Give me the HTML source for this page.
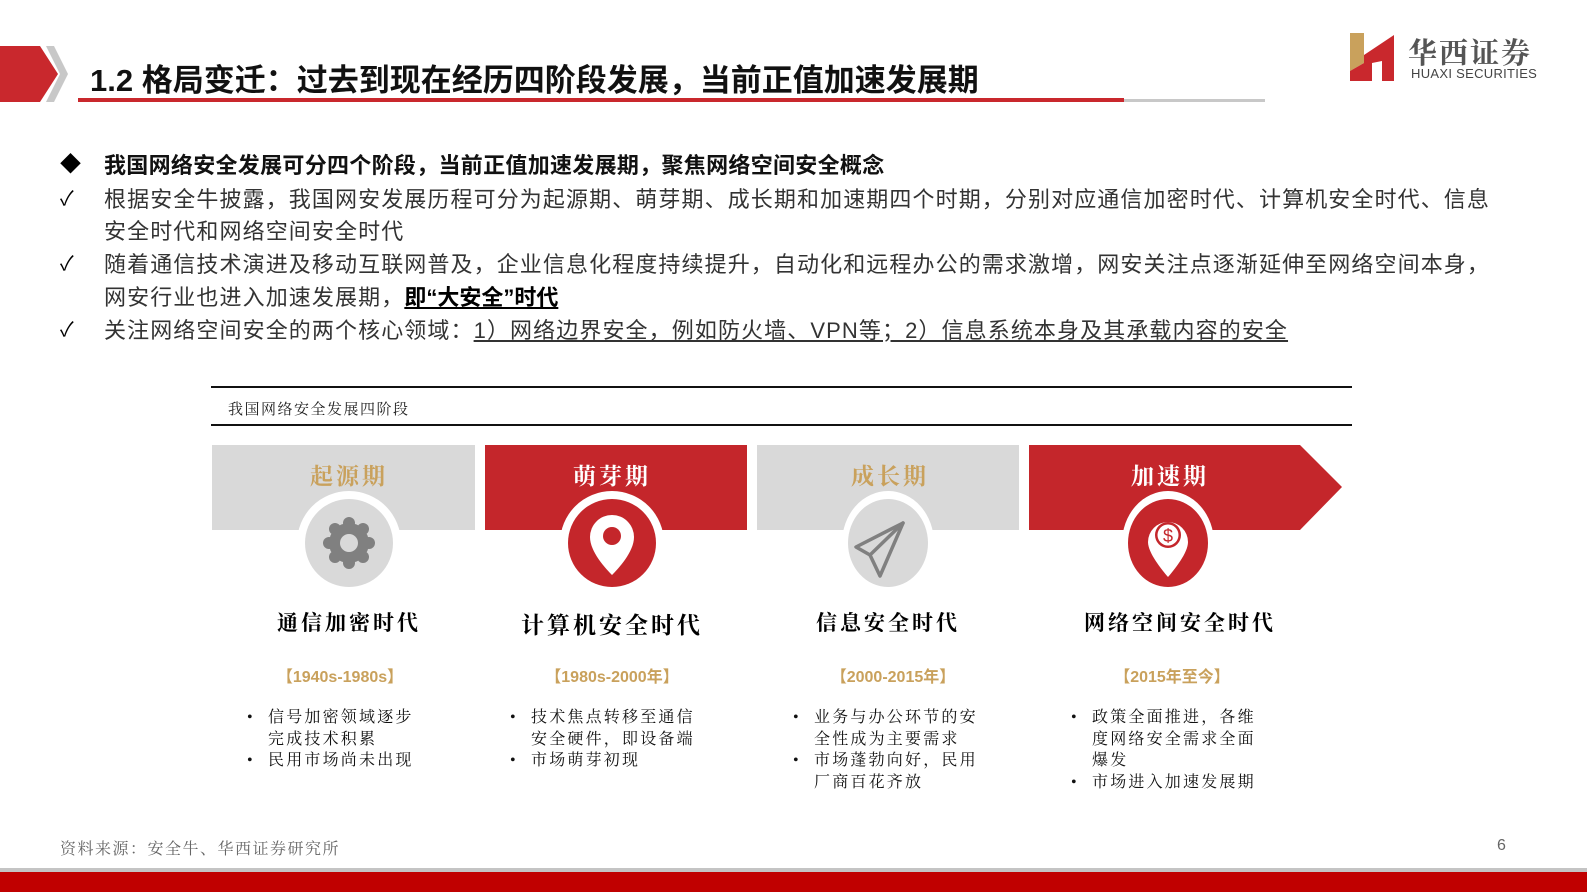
<!DOCTYPE html>
<html><head><meta charset="utf-8"><style>
*{margin:0;padding:0;box-sizing:border-box}
body{width:1587px;height:892px;position:relative;overflow:hidden;background:#fff;font-family:"Liberation Sans","Noto Sans CJK SC",sans-serif}
.a{position:absolute;white-space:nowrap}
.body{font-size:22px;letter-spacing:1.1px;color:#333;line-height:33px}
.serif{font-family:"Liberation Serif","Noto Serif CJK SC",serif}
.band{position:absolute;top:445px;height:85px}
.lbl{position:absolute;top:458px;font-size:23px;font-weight:bold;letter-spacing:3px;text-align:center;width:200px}
.era{position:absolute;top:607px;font-size:21px;font-weight:bold;letter-spacing:3px;color:#000;text-align:center;width:260px}
.yr{position:absolute;top:663px;font-size:16px;font-weight:bold;color:#c9a15c;text-align:center;width:200px}
.bl{position:absolute;top:707px;font-size:16px;line-height:21.6px;color:#111;letter-spacing:2.2px;white-space:normal}
.bl div{position:relative;padding-left:21px}
.bl div::before{content:"•";position:absolute;left:0;top:0}
</style></head><body>
<svg class="a" style="left:0;top:46px" width="70" height="58"><polygon points="0,0 40,0 58,28 40,56 0,56" fill="#c9282d"/><polygon points="46,0 54,0 68,28 54,56 46,56 60,28" fill="#c8c8c8"/></svg>
<div class="a" style="left:90px;top:55px;font-size:31px;font-weight:bold;color:#111">1.2 格局变迁：过去到现在经历四阶段发展，当前正值加速发展期</div>
<div class="a" style="left:78px;top:98px;width:1046px;height:4px;background:#c9282d"></div>
<div class="a" style="left:1124px;top:99px;width:141px;height:3px;background:#c8c8c8"></div>
<svg class="a" style="left:1350px;top:33px" width="46" height="48"><polygon points="0,0 14,0 14,30 0,38" fill="#c9a15c"/><polygon points="0,38 14,30 14,48 0,48" fill="#c9282d"/><polygon points="14,22 44,2 44,48 32,48 32,28 22,30 22,48 14,48" fill="#c9282d"/></svg>
<div class="a serif" style="left:1408px;top:31px;font-size:29px;font-weight:bold;color:#555;letter-spacing:2px">华西证券</div>
<div class="a" style="left:1411px;top:66px;font-size:13px;color:#444;letter-spacing:.3px">HUAXI SECURITIES</div>
<div class="a" style="left:60px;top:150px;font-size:21px;line-height:30px;color:#000">◆</div>
<div class="a" style="left:104px;top:149px;font-size:22px;font-weight:bold;color:#111;letter-spacing:.3px;line-height:33px">我国网络安全发展可分四个阶段，当前正值加速发展期，聚焦网络空间安全概念</div>
<div class="a" style="left:60px;top:183px;font-size:20px;line-height:33px;color:#000">✓</div>
<div class="a body" style="left:104px;top:183px">根据安全牛披露，我国网安发展历程可分为起源期、萌芽期、成长期和加速期四个时期，分别对应通信加密时代、计算机安全时代、信息</div>
<div class="a body" style="left:104px;top:215px">安全时代和网络空间安全时代</div>
<div class="a" style="left:60px;top:248px;font-size:20px;line-height:33px;color:#000">✓</div>
<div class="a body" style="left:104px;top:248px">随着通信技术演进及移动互联网普及，企业信息化程度持续提升，自动化和远程办公的需求激增，网安关注点逐渐延伸至网络空间本身，</div>
<div class="a body" style="left:104px;top:281px">网安行业也进入加速发展期，<b style="color:#000;text-decoration:underline;letter-spacing:0">即“大安全”时代</b></div>
<div class="a" style="left:60px;top:314px;font-size:20px;line-height:33px;color:#000">✓</div>
<div class="a body" style="left:104px;top:314px">关注网络空间安全的两个核心领域：<span style="text-decoration:underline">1）网络边界安全，例如防火墙、VPN等；2）信息系统本身及其承载内容的安全</span></div>
<div class="a" style="left:211px;top:386px;width:1141px;height:2px;background:#111"></div>
<div class="a serif" style="left:228px;top:398px;font-size:15px;color:#222;letter-spacing:1.5px">我国网络安全发展四阶段</div>
<div class="a" style="left:211px;top:424px;width:1141px;height:2px;background:#111"></div>
<div class="band" style="left:212px;width:263px;background:#d9d9d9"></div>
<div class="band" style="left:485px;width:262px;background:#c4262b"></div>
<div class="band" style="left:757px;width:262px;background:#d9d9d9"></div>
<svg class="a" style="left:1029px;top:445px" width="314" height="85"><polygon points="0,0 271,0 313,42 271,85 0,85" fill="#c4262b"/></svg>
<div class="lbl serif" style="left:249px;color:#c9a15c">起源期</div>
<div class="lbl serif" style="left:512px;color:#fff">萌芽期</div>
<div class="lbl serif" style="left:790px;color:#c9a15c">成长期</div>
<div class="lbl serif" style="left:1070px;color:#fff">加速期</div>
<svg class="a" style="left:0;top:0" width="1587" height="892">
<circle cx="349" cy="543" r="52" fill="#fff"/><circle cx="349" cy="543" r="44" fill="#d9d9d9"/>
<g fill="#808080"><circle cx="349" cy="543" r="20"/>
<circle cx="349" cy="523" r="6"/><circle cx="349" cy="563" r="6"/><circle cx="329" cy="543" r="6"/><circle cx="369" cy="543" r="6"/><circle cx="335" cy="529" r="6"/><circle cx="363" cy="529" r="6"/><circle cx="335" cy="557" r="6"/><circle cx="363" cy="557" r="6"/></g>
<circle cx="349" cy="543" r="9" fill="#d9d9d9"/>
<circle cx="612" cy="543" r="52" fill="#fff"/><circle cx="612" cy="543" r="44" fill="#c4262b"/>
<path d="M612 575 C606 569 590 552 590 537 A22 22 0 0 1 634 537 C634 552 618 569 612 575Z" fill="#fff"/><circle cx="612" cy="536" r="9" fill="#c4262b"/>
<ellipse cx="888" cy="543" rx="46" ry="52" fill="#fff"/><ellipse cx="888" cy="543" rx="40" ry="44" fill="#d9d9d9"/>
<g fill="none" stroke="#808080" stroke-width="3.5" stroke-linejoin="round" stroke-linecap="round"><path d="M903 523 L856 547 L870 555 L880 576 Z"/><path d="M870 555 L903 523"/></g>
<ellipse cx="1168" cy="543" rx="46" ry="52" fill="#fff"/><ellipse cx="1168" cy="543" rx="40" ry="44" fill="#c4262b"/>
<path d="M1168 577 C1162 570 1148 553 1148 542 A20 20 0 0 1 1188 542 C1188 553 1174 570 1168 577Z" fill="#fff"/><circle cx="1168" cy="535" r="13" fill="#c4262b"/><circle cx="1168" cy="535" r="10.5" fill="#fff"/>
<text x="1168" y="542" font-size="18" text-anchor="middle" fill="#c4262b" font-family="Liberation Sans">$</text>
</svg>
<div class="era serif" style="left:219px">通信加密时代</div>
<div class="era serif" style="left:482px;font-size:23px">计算机安全时代</div>
<div class="era serif" style="left:758px">信息安全时代</div>
<div class="era serif" style="left:1050px">网络空间安全时代</div>
<div class="yr" style="left:240px">【1940s-1980s】</div>
<div class="yr" style="left:512px">【1980s-2000年】</div>
<div class="yr" style="left:793px">【2000-2015年】</div>
<div class="yr" style="left:1072px">【2015年至今】</div>
<div class="bl serif" style="left:247px;width:180px"><div>信号加密领域逐步完成技术积累</div><div>民用市场尚未出现</div></div>
<div class="bl serif" style="left:510px;width:200px"><div>技术焦点转移至通信安全硬件，即设备端</div><div>市场萌芽初现</div></div>
<div class="bl serif" style="left:793px;width:200px"><div>业务与办公环节的安全性成为主要需求</div><div>市场蓬勃向好，民用厂商百花齐放</div></div>
<div class="bl serif" style="left:1071px;width:200px"><div>政策全面推进，各维度网络安全需求全面爆发</div><div>市场进入加速发展期</div></div>
<div class="a serif" style="left:60px;top:836px;font-size:16px;color:#666;letter-spacing:1.5px">资料来源：安全牛、华西证券研究所</div>
<div class="a" style="left:1497px;top:837px;font-size:16px;color:#666">6</div>
<div class="a" style="left:0;top:868px;width:1587px;height:4px;background:#c4c4c4"></div>
<div class="a" style="left:0;top:872px;width:1587px;height:20px;background:#c00000"></div>
</body></html>
